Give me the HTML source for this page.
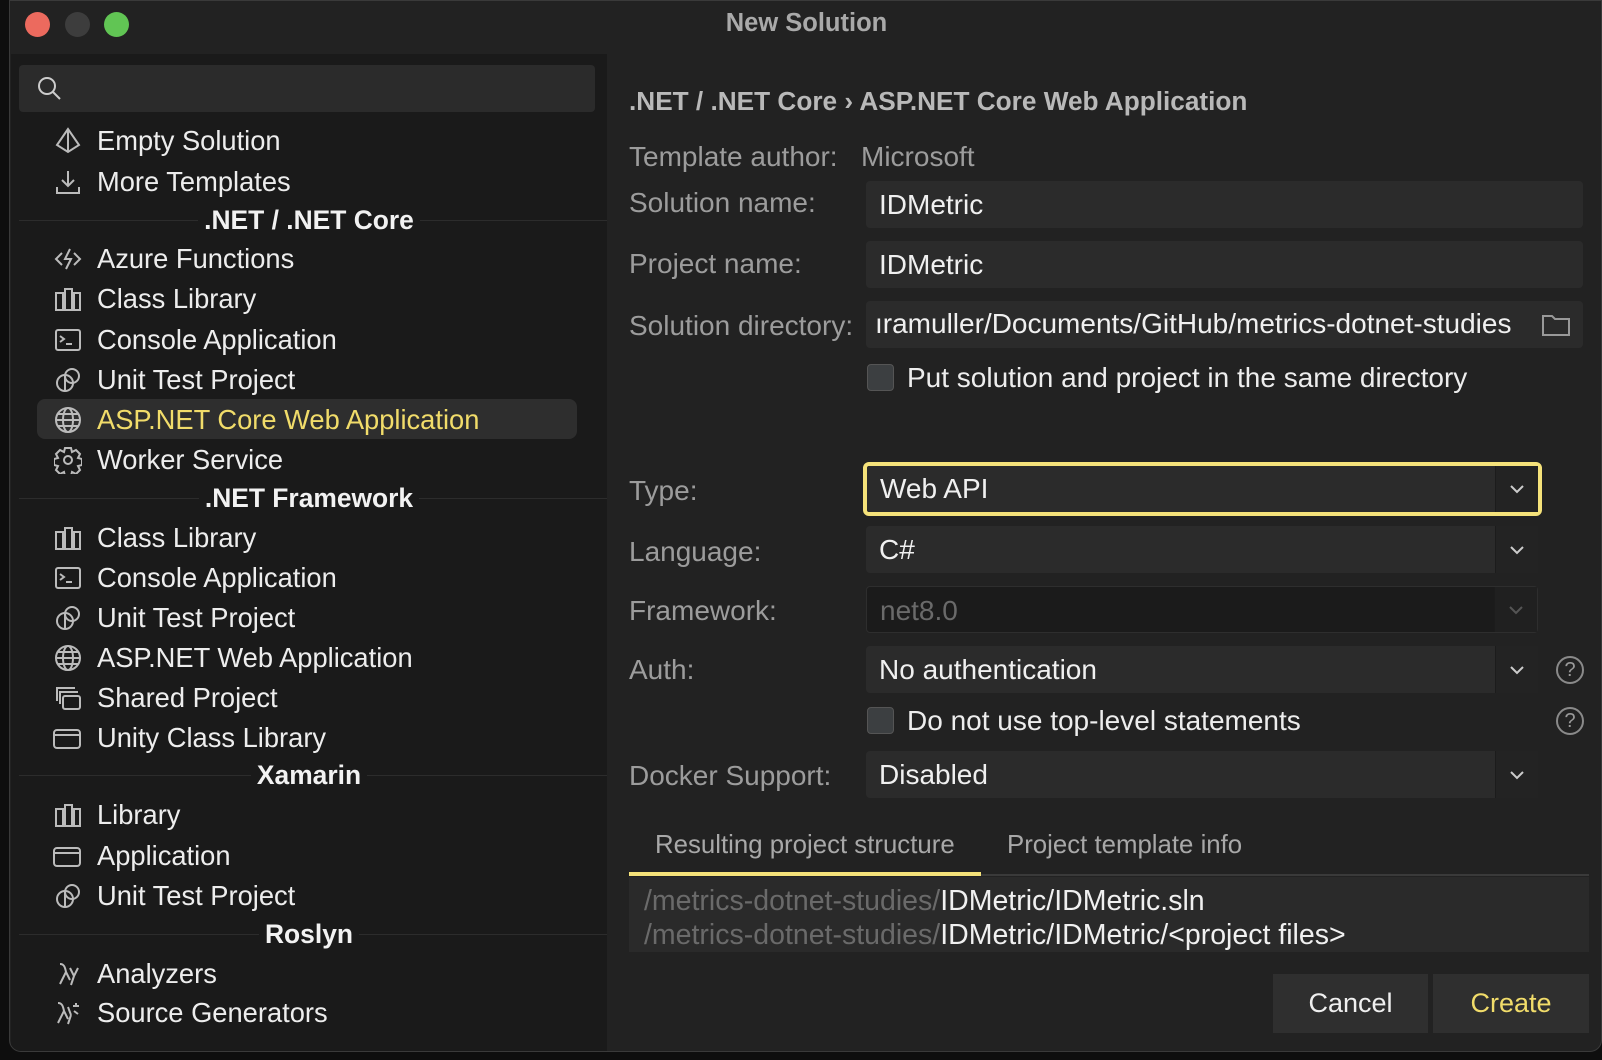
<!DOCTYPE html>
<html><head><meta charset="utf-8"><style>
*{margin:0;padding:0;box-sizing:border-box}
body{width:1602px;height:1060px;background:#0e0e0e;overflow:hidden;font-family:"Liberation Sans",sans-serif;position:relative}
.win{position:absolute;left:9px;top:0;width:1593px;height:1052px;background:#222222;border-radius:0 0 12px 12px;border:1px solid #3a3a3a;overflow:hidden}
.abs{position:absolute}
.left{position:absolute;left:1px;top:53px;width:596px;height:1000px;background:#1a1a1a}
.row{position:absolute;left:86px;height:32px;line-height:32px;font-size:27.3px;color:#ededed;white-space:nowrap}
.ic{position:absolute;left:-43px;top:2px;width:28px;height:28px}
.hdr{position:absolute;height:32px;line-height:32px;font-size:26.4px;font-weight:bold;color:#f2f2f2;text-align:center;left:0;width:596px}
.hdr span{background:#1a1a1a;padding:0 6px;position:relative}
.hdr:before{content:"";position:absolute;left:8px;right:0;top:16px;height:1px;background:#2c2c2c}
.lbl{position:absolute;left:619px;font-size:28px;color:#9c9c9c;line-height:32px;height:32px;white-space:nowrap}
.inp{position:absolute;left:856px;width:717px;background:#2b2b2b;border-radius:4px;color:#f0f0f0;font-size:28px;padding-left:13px;white-space:nowrap;overflow:hidden}
.dd{position:absolute;left:856px;width:672px;background:#2b2b2b;border-radius:4px;color:#f0f0f0;font-size:28px;padding-left:13px;white-space:nowrap}
.dd .arr{position:absolute;right:0;top:0;bottom:0;width:43px;background:#232323;border-left:1px solid #1c1c1c}
.dd .arr svg{position:absolute;left:13px;top:50%;margin-top:-6px}
.cb{position:absolute;left:857px;width:27px;height:27px;background:#3c3f41;border:1px solid #555;border-radius:4px}
.help{position:absolute;left:1546px;width:28px;height:28px;border:2px solid #8a8a8a;border-radius:50%;color:#9a9a9a;font-size:20px;text-align:center;line-height:24px}
</style></head><body>
<div class="win">
 <div class="abs" style="left:0;top:0;width:1593px;height:53px;background:#222"></div>
 <div class="abs" style="left:15px;top:11px;width:25px;height:25px;border-radius:50%;background:#ec6a5e"></div>
 <div class="abs" style="left:55px;top:11px;width:25px;height:25px;border-radius:50%;background:#3d3d3d"></div>
 <div class="abs" style="left:94px;top:11px;width:25px;height:25px;border-radius:50%;background:#61c554"></div>
 <div class="abs" style="left:0;width:1593px;top:6px;text-align:center;font-size:25.5px;font-weight:bold;color:#a9a9a9;line-height:32px">New Solution</div>

 <div class="left">
  <div class="abs" style="left:8px;top:11px;width:576px;height:47px;background:#2b2b2b;border-radius:4px"></div>
  <svg class="abs" style="left:25px;top:21px" width="28" height="28" viewBox="0 0 28 28"><circle cx="11" cy="11" r="8" fill="none" stroke="#ccc" stroke-width="2"/><line x1="17" y1="17" x2="24" y2="24" stroke="#ccc" stroke-width="2"/></svg>

  <div class="abs" style="left:26px;top:345px;width:540px;height:40px;background:#2e2e2e;border-radius:8px"></div>

  <div class="row" style="top:71px"><svg class="ic" viewBox="0 0 28 28" fill="none" stroke="#bbb" stroke-width="2"><path d="M14 2 L3 18 L14 25 L25 18 Z M14 2 V25"/></svg>Empty Solution</div>
  <div class="row" style="top:112px"><svg class="ic" viewBox="0 0 28 28" fill="none" stroke="#bbb" stroke-width="2"><path d="M14 3V18M8 12l6 6 6-6M3 19v6h22v-6"/></svg>More Templates</div>
  <div class="hdr" style="top:150px"><span>.NET / .NET Core</span></div>
  <div class="row" style="top:189px"><svg class="ic" viewBox="0 0 28 28" fill="none" stroke="#bbb" stroke-width="2"><path d="M8 8L2 14l6 6M20 8l6 6-6 6M16 4l-5 10h6l-5 10"/></svg>Azure Functions</div>
  <div class="row" style="top:229px"><svg class="ic" viewBox="0 0 28 28" fill="none" stroke="#bbb" stroke-width="2"><rect x="2" y="8" width="7" height="17"/><rect x="11" y="4" width="7" height="21"/><rect x="20" y="8" width="6" height="17"/></svg>Class Library</div>
  <div class="row" style="top:270px"><svg class="ic" viewBox="0 0 28 28" fill="none" stroke="#bbb" stroke-width="2"><rect x="2" y="4" width="24" height="20" rx="2"/><path d="M6 10l4 3-4 3M12 18h6"/></svg>Console Application</div>
  <div class="row" style="top:310px"><svg class="ic" viewBox="0 0 28 28" fill="none" stroke="#bbb" stroke-width="2"><circle cx="11" cy="17" r="8"/><circle cx="18" cy="10" r="7"/><path d="M11 9v16" /></svg>Unit Test Project</div>
  <div class="row" style="top:350px;color:#f1dc6a"><svg class="ic" viewBox="0 0 28 28" fill="none" stroke="#bbb" stroke-width="2"><circle cx="14" cy="14" r="12"/><ellipse cx="14" cy="14" rx="5" ry="12"/><path d="M2 14h24M4 8h20M4 20h20"/></svg>ASP.NET Core Web Application</div>
  <div class="row" style="top:390px"><svg class="ic" viewBox="0 0 28 28" fill="none" stroke="#bbb" stroke-width="2"><path d="M11 2h6l1 4 4-2 4 4-2 4 4 1v6l-4 1 2 4-4 4-4-2-1 4h-6l-1-4-4 2-4-4 2-4-4-1v-6l4-1-2-4 4-4 4 2z"/><circle cx="14" cy="14" r="4"/></svg>Worker Service</div>
  <div class="hdr" style="top:428px"><span>.NET Framework</span></div>
  <div class="row" style="top:468px"><svg class="ic" viewBox="0 0 28 28" fill="none" stroke="#bbb" stroke-width="2"><rect x="2" y="8" width="7" height="17"/><rect x="11" y="4" width="7" height="21"/><rect x="20" y="8" width="6" height="17"/></svg>Class Library</div>
  <div class="row" style="top:508px"><svg class="ic" viewBox="0 0 28 28" fill="none" stroke="#bbb" stroke-width="2"><rect x="2" y="4" width="24" height="20" rx="2"/><path d="M6 10l4 3-4 3M12 18h6"/></svg>Console Application</div>
  <div class="row" style="top:548px"><svg class="ic" viewBox="0 0 28 28" fill="none" stroke="#bbb" stroke-width="2"><circle cx="11" cy="17" r="8"/><circle cx="18" cy="10" r="7"/><path d="M11 9v16"/></svg>Unit Test Project</div>
  <div class="row" style="top:588px"><svg class="ic" viewBox="0 0 28 28" fill="none" stroke="#bbb" stroke-width="2"><circle cx="14" cy="14" r="12"/><ellipse cx="14" cy="14" rx="5" ry="12"/><path d="M2 14h24M4 8h20M4 20h20"/></svg>ASP.NET Web Application</div>
  <div class="row" style="top:628px"><svg class="ic" viewBox="0 0 28 28" fill="none" stroke="#bbb" stroke-width="2"><path d="M3 17V4h18"/><path d="M6 20V8h18"/><rect x="9" y="12" width="17" height="13" rx="2"/></svg>Shared Project</div>
  <div class="row" style="top:668px"><svg class="ic" viewBox="0 0 28 28" fill="none" stroke="#bbb" stroke-width="2" style="left:-46px;width:32px"><rect x="1" y="6" width="26" height="18" rx="3"/><path d="M1 11h26"/></svg>Unity Class Library</div>
  <div class="hdr" style="top:705px"><span>Xamarin</span></div>
  <div class="row" style="top:745px"><svg class="ic" viewBox="0 0 28 28" fill="none" stroke="#bbb" stroke-width="2"><rect x="2" y="8" width="7" height="17"/><rect x="11" y="4" width="7" height="21"/><rect x="20" y="8" width="6" height="17"/></svg>Library</div>
  <div class="row" style="top:786px"><svg class="ic" viewBox="0 0 28 28" fill="none" stroke="#bbb" stroke-width="2" style="left:-46px;width:32px"><rect x="1" y="6" width="26" height="18" rx="3"/><path d="M1 11h26"/></svg>Application</div>
  <div class="row" style="top:826px"><svg class="ic" viewBox="0 0 28 28" fill="none" stroke="#bbb" stroke-width="2"><circle cx="11" cy="17" r="8"/><circle cx="18" cy="10" r="7"/><path d="M11 9v16"/></svg>Unit Test Project</div>
  <div class="hdr" style="top:864px"><span>Roslyn</span></div>
  <div class="row" style="top:904px"><svg class="ic" viewBox="0 0 28 28" fill="none" stroke="#bbb" stroke-width="2"><path d="M6 4c4 0 5 3 6 8l-6 12M12 12l4 8M16 8l4 8 4-8M20 16l-3 9"/></svg>Analyzers</div>
  <div class="row" style="top:943px"><svg class="ic" viewBox="0 0 28 28" fill="none" stroke="#bbb" stroke-width="2"><path d="M4 4c4 0 5 3 6 8l-6 12M10 12l4 8M14 8l3 8M17 16l-3 9M22 4v4M19 7h6M20 12l4 3"/></svg>Source Generators</div>
 </div>

 <div class="abs" style="left:619px;top:84px;font-size:26.2px;font-weight:bold;color:#b9b9b9;line-height:32px">.NET / .NET Core › ASP.NET Core Web Application</div>
 <div class="lbl" style="top:140px">Template author:</div>
 <div class="lbl" style="top:140px;left:851px">Microsoft</div>
 <div class="lbl" style="top:186px">Solution name:</div>
 <div class="inp" style="top:180px;height:47px;line-height:47px">IDMetric</div>
 <div class="lbl" style="top:247px">Project name:</div>
 <div class="inp" style="top:240px;height:47px;line-height:47px">IDMetric</div>
 <div class="lbl" style="top:309px">Solution directory:</div>
 <div class="inp" style="top:300px;height:47px;line-height:45px;padding-left:9px">ıramuller/Documents/GitHub/metrics-dotnet-studies
  <svg class="abs" style="right:12px;top:11px" width="30" height="25" viewBox="0 0 30 25" fill="none" stroke="#999" stroke-width="2"><path d="M2 4h9l3 3h14v16H2z"/></svg></div>
 <div class="cb" style="top:363px"></div>
 <div class="abs" style="left:897px;top:361px;font-size:28px;color:#ededed;line-height:32px">Put solution and project in the same directory</div>

 <div class="lbl" style="top:474px">Type:</div>
 <div class="abs" style="left:853px;top:461px;width:679px;height:54px;border:4px solid #f5e27a;border-radius:6px"></div>
 <div class="dd" style="top:465px;height:46px;line-height:46px;left:857px;width:671px">Web API<div class="arr"><svg width="16" height="12"><path d="M2 3l6 6 6-6" fill="none" stroke="#ccc" stroke-width="2"/></svg></div></div>
 <div class="lbl" style="top:535px">Language:</div>
 <div class="dd" style="top:525px;height:47px;line-height:47px">C#<div class="arr"><svg width="16" height="12"><path d="M2 3l6 6 6-6" fill="none" stroke="#ccc" stroke-width="2"/></svg></div></div>
 <div class="lbl" style="top:594px">Framework:</div>
 <div class="dd" style="top:585px;height:47px;line-height:47px;background:#1b1b1b;color:#6a6a6a;border:1px solid #2e2e2e">net8.0<div class="arr" style="background:#202020"><svg width="16" height="12"><path d="M2 3l6 6 6-6" fill="none" stroke="#555" stroke-width="2"/></svg></div></div>
 <div class="lbl" style="top:653px">Auth:</div>
 <div class="dd" style="top:645px;height:47px;line-height:47px">No authentication<div class="arr"><svg width="16" height="12"><path d="M2 3l6 6 6-6" fill="none" stroke="#ccc" stroke-width="2"/></svg></div></div>
 <div class="help" style="top:655px">?</div>
 <div class="cb" style="top:706px"></div>
 <div class="abs" style="left:897px;top:704px;font-size:28px;color:#ededed;line-height:32px">Do not use top-level statements</div>
 <div class="help" style="top:706px">?</div>
 <div class="lbl" style="top:759px">Docker Support:</div>
 <div class="dd" style="top:750px;height:47px;line-height:47px">Disabled<div class="arr"><svg width="16" height="12"><path d="M2 3l6 6 6-6" fill="none" stroke="#ccc" stroke-width="2"/></svg></div></div>

 <div class="abs" style="left:645px;top:828px;font-size:25.8px;color:#a8a8a8;line-height:32px">Resulting project structure</div>
 <div class="abs" style="left:997px;top:828px;font-size:25.8px;color:#a8a8a8;line-height:32px">Project template info</div>
 <div class="abs" style="left:619px;top:873px;width:960px;height:2px;background:#3a3a3a"></div>
 <div class="abs" style="left:619px;top:871px;width:352px;height:4px;background:#f5e27a"></div>
 <div class="abs" style="left:619px;top:876px;width:960px;height:75px;background:#2a2a2a;font-size:28.5px;line-height:34px;padding:7px 0 0 15px;color:#f0f0f0;white-space:nowrap;overflow:hidden">
  <div><span style="color:#6a6a6a">/metrics-dotnet-studies/</span>IDMetric/IDMetric.sln</div>
  <div><span style="color:#6a6a6a">/metrics-dotnet-studies/</span>IDMetric/IDMetric/&lt;project files&gt;</div>
 </div>
 <div class="abs" style="left:1263px;top:973px;width:155px;height:59px;background:#2f2f2f;color:#efefef;font-size:27px;text-align:center;line-height:59px">Cancel</div>
 <div class="abs" style="left:1423px;top:973px;width:156px;height:59px;background:#2f2f2f;color:#f1dc6a;font-size:27px;text-align:center;line-height:59px">Create</div>
</div>
</body></html>
